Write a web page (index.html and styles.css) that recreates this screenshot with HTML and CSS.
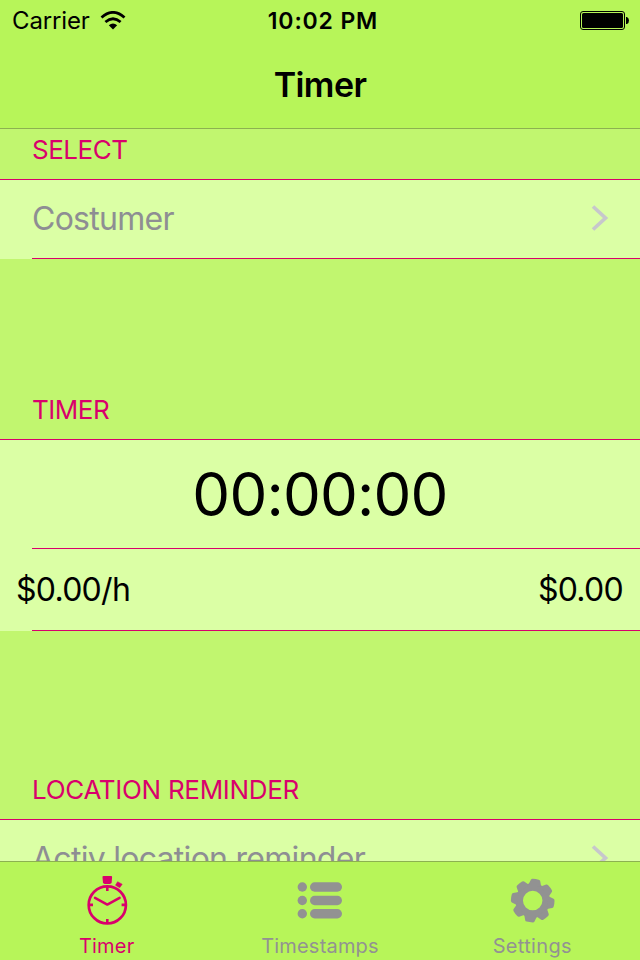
FILE: index.html
```html
<!DOCTYPE html>
<html lang="en">
<head>
<meta charset="utf-8">
<title>Timer</title>
<link rel="stylesheet" href="styles.css">
</head>
<body>
<div class="screen">
  <header class="navbar">
    <div class="status">
      <div class="carrier"><span class="carrier-name">Carrier</span>
        <svg class="wifi" width="26" height="20" viewBox="0 0 26 20"><path d="M1.500 6.500Q13-3.700 24.500 6.500" fill="none" stroke="#000" stroke-width="2.800"/><path d="M5.400 11Q13 4.600 20.600 11" fill="none" stroke="#000" stroke-width="2.800"/><path d="M8.800 14.300Q13 10.600 17.200 14.300L13 18.600Z"/></svg>
      </div>
      <div class="clock">10:02 PM</div>
      <svg class="battery" width="50" height="20" viewBox="0 0 50 20"><rect x=".5" y=".5" width="44" height="18" rx="2.500" fill="none" stroke="#000"/><rect x="2" y="2" width="41" height="15" rx="1.500"/><path d="M46 6h1q2 1 2 3.500T47 13h-1z"/></svg>
    </div>
    <h1 class="title">Timer</h1>
  </header>
  <main class="content">
    <section class="group">
      <h2 class="heading">SELECT</h2>
      <div class="row link-row"><span>Costumer</span>
        <svg class="chevron" width="18" height="28" viewBox="0 0 18 28"><path d="M2 2.500 14.500 14 2 25.500" fill="none" stroke="#c7c7cc" stroke-width="3.700"/></svg></div>
    </section>
    <section class="group group-timer">
      <h2 class="heading">TIMER</h2>
      <div class="row time-row"><span>00:00:00</span></div>
      <div class="row rate-row"><span>$0.00/h</span><span>$0.00</span></div>
    </section>
    <section class="group group-location">
      <h2 class="heading">LOCATION REMINDER</h2>
      <div class="row link-row"><span>Activ location reminder</span>
        <svg class="chevron" width="18" height="28" viewBox="0 0 18 28"><path d="M2 2.500 14.500 14 2 25.500" fill="none" stroke="#c7c7cc" stroke-width="3.700"/></svg></div>
    </section>
  </main>
  <nav class="tabs">
    <a class="tab active">
      <svg width="48" height="52" viewBox="83 873 48 52" fill="none" stroke="currentColor"><circle cx="107.300" cy="904.900" r="18.600" stroke-width="2.700"/><path d="M95 897.800 107.300 904.600 119.600 897.800" stroke-width="2.500" stroke-linecap="round" stroke-linejoin="round"/><path d="M107.300 887v4M107.300 919v4M89 904.900h4M121.600 904.900h4" stroke-width="2.600"/><path d="M103.500 876h7.600q1.200 0 1 1.200l-.5 5.800-1.600 1h-5.400l-1.600-1-.5-5.800q-.2-1.200 1-1.200Z" fill="currentColor" stroke="none"/><path d="m117.600 881.700 4.600 2.500-2.500 3.500-4.200-2.500z" fill="currentColor" stroke="currentColor" stroke-width=".5"/></svg>
      <span>Timer</span>
    </a>
    <a class="tab">
      <svg width="48" height="52" viewBox="296 873 48 52" fill="currentColor"><circle cx="302.300" cy="887" r="4.700"/><circle cx="302.300" cy="900.500" r="4.700"/><circle cx="302.300" cy="913.700" r="4.700"/><rect x="310" y="882.300" width="32" height="9.400" rx="4.700"/><rect x="310" y="895.800" width="32" height="9.400" rx="4.700"/><rect x="310" y="909" width="32" height="9.400" rx="4.700"/></svg>
      <span>Timestamps</span>
    </a>
    <a class="tab tab-settings">
      <svg width="48" height="52" viewBox="-24.700 -27.600 48 52" fill="none"><circle r="13.500" stroke="currentColor" stroke-width="7.500"/><g fill="currentColor" transform="rotate(8)"><path id="tooth" d="M-6.500-15 -4.700-20.400Q-4.300-21.500-3-21.600Q0-22 3-21.600Q4.300-21.500 4.700-20.400L6.500-15Z"/><use href="#tooth" transform="rotate(45)"/><use href="#tooth" transform="rotate(90)"/><use href="#tooth" transform="rotate(135)"/><use href="#tooth" transform="rotate(180)"/><use href="#tooth" transform="rotate(225)"/><use href="#tooth" transform="rotate(270)"/><use href="#tooth" transform="rotate(315)"/></g></svg>
      <span>Settings</span>
    </a>
  </nav>
</div>
</body>
</html>
```
FILE: styles.css
```css
* { box-sizing: border-box; }
body { margin: 0; font-family: Inter, "Liberation Sans", sans-serif; font-size: 32px; color: #000; }
.screen { width: 640px; height: 960px; display: flex; flex-direction: column; overflow: hidden; background: #c1f66f; }
span, .clock, .title { white-space: nowrap; }
.navbar { height: 129px; flex: none; background: #b7f559; border-bottom: 1px solid #8cb150; }
.status { height: 40px; padding: 0 10px 0 12px; display: grid; grid-template-columns: 1fr auto 1fr; align-items: center; font-size: 24px; }
.carrier { display: flex; align-items: center; gap: 10px; }
.carrier-name { letter-spacing: -.15px; }
.wifi { margin-top: 2px; }
.clock { padding: 2px 0 0 4px; font-weight: 600; font-size: 23px; letter-spacing: .85px; }
.battery { justify-self: end; margin-top: 2px; }
.title { margin: 0; padding-top: 1px; line-height: 88px; text-align: center; font-size: 34px; font-weight: 600; letter-spacing: -.6px; }
.content { flex: 1; min-height: 0; overflow: hidden; }
.heading { margin: 0; padding: 0 32px 14px; height: 50px; display: flex; align-items: flex-end; font-size: 26px; line-height: 30px; font-weight: 400; letter-spacing: -.5px; color: #d9006c; }
.group-timer .heading { height: 180px; }
.group-location .heading { height: 188px; letter-spacing: -.3px; }
.row { background: #dbffa5; display: flex; align-items: center; position: relative; letter-spacing: -.72px; }
.row::after { content: ""; position: absolute; left: 32px; right: 0; bottom: 0; height: 1px; background: #d9006c; }
.heading + .row { border-top: 1px solid #d9006c; }
.link-row { height: 80px; padding: 0 31px 3px 32px; justify-content: space-between; color: #8e8e93; }
.time-row { height: 110px; padding-bottom: 1px; justify-content: center; font-size: 60px; letter-spacing: -.8px; }
.rate-row { height: 82px; padding: 0 17px 1px 16px; justify-content: space-between; }
.tabs { height: 99px; flex: none; display: grid; grid-template-columns: repeat(3, 1fr); background: #b7f559; border-top: 1px solid #8cb150; }
.tab { display: flex; flex-direction: column; align-items: center; padding-top: 11px; font-size: 20px; line-height: 24px; color: #929292; }
.tab span { margin-top: 9px; letter-spacing: .2px; }
.tab-settings { padding-right: 2px; }
.tab-settings span { letter-spacing: .35px; }
.active { color: #d9006c; }
```
